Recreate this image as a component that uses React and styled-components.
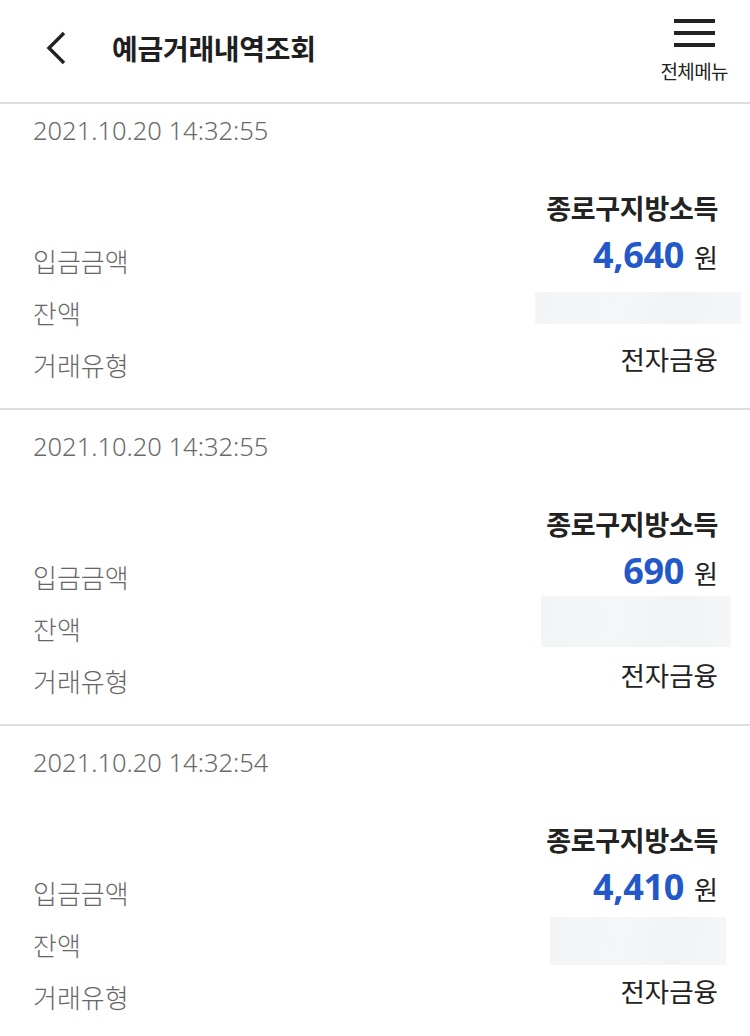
import React from "react";
import styled, { createGlobalStyle } from "styled-components";

const Global = createGlobalStyle`
  html, body { margin: 0; padding: 0; background: #fff; }
  body {
    font-family: "Noto Sans", "Noto Sans CJK KR", sans-serif;
    -webkit-font-smoothing: antialiased;
  }
  * { box-sizing: border-box; }
`;

const Screen = styled.div`
  width: 750px;
  height: 1036px;
  overflow: hidden;
  display: flex;
  flex-direction: column;
  background: #fff;
`;

const Header = styled.header`
  flex: 0 0 auto;
  height: 104px;
  display: flex;
  align-items: center;
  justify-content: space-between;
  border-bottom: 2px solid #dedede;
  padding: 0 22px 0 44px;
  position: relative;
  z-index: 1;
  background: #fff;
`;

const TitleGroup = styled.div`
  display: flex;
  align-items: center;
  gap: 44px;
  padding-bottom: 6px;
`;

const BackButton = styled.button`
  border: 0;
  background: none;
  padding: 0;
  width: 24px;
  height: 34px;
  display: flex;
  align-items: center;
  justify-content: center;
  color: #222;
`;

const Title = styled.h1`
  margin: 0;
  font-family: "Noto Sans CJK KR", sans-serif;
  font-size: 28px;
  font-weight: 700;
  color: #1f1f1f;
  letter-spacing: -0.3px;
`;

const MenuButton = styled.button`
  border: 0;
  background: none;
  padding: 0;
  display: flex;
  flex-direction: column;
  align-items: center;
  gap: 13px;
  margin-top: -2px;
`;

const Burger = styled.div`
  width: 41px;
  height: 28px;
  display: flex;
  flex-direction: column;
  justify-content: space-between;
`;

const BurgerLine = styled.span`
  display: block;
  height: 4px;
  background: #222;
`;

const MenuLabel = styled.span`
  font-family: "Noto Sans CJK KR", sans-serif;
  font-size: 19px;
  line-height: 22px;
  color: #222;
  letter-spacing: -0.6px;
`;

const Body = styled.div`
  flex: 1 1 auto;
  overflow: hidden;
`;

const List = styled.ul`
  list-style: none;
  margin: -10px 0 0;
  padding: 0;
`;

const Entry = styled.li`
  padding: 16px 32px 18px 33px;
  border-bottom: 2px solid #dedede;
`;

const DateText = styled.div`
  font-family: "Noto Sans", "Noto Sans CJK KR", sans-serif;
  font-size: 25.5px;
  line-height: 40px;
  font-weight: 300;
  color: #6a6a6a;
  margin-bottom: 32px;
`;

const Merchant = styled.div`
  font-family: "Noto Sans CJK KR", sans-serif;
  font-size: 27px;
  font-weight: 700;
  line-height: 52px;
  color: #222;
  text-align: right;
  letter-spacing: -0.3px;
`;

const Row = styled.div`
  height: 52px;
  display: flex;
  align-items: center;
  justify-content: space-between;
`;

const Label = styled.span`
  font-family: "Noto Sans CJK KR", sans-serif;
  font-size: 26px;
  font-weight: 300;
  color: #666;
`;

const Value = styled.span`
  font-family: "Noto Sans CJK KR", sans-serif;
  font-size: 26.5px;
  color: #222;
  padding-bottom: 12px;
`;

const AmountWrap = styled.span`
  display: flex;
  align-items: baseline;
  gap: 10px;
  padding-bottom: 12px;
`;

const Amount = styled.span`
  font-family: "Noto Sans", sans-serif;
  font-size: 36px;
  font-weight: 700;
  color: #2358c8;
  letter-spacing: -0.3px;
`;

const Won = styled.span`
  font-family: "Noto Sans CJK KR", sans-serif;
  font-size: 26px;
  color: #222;
`;

const Mask = styled.span`
  display: block;
  width: ${(p) => p.$w}px;
  height: ${(p) => p.$h}px;
  margin-right: ${(p) => -p.$over}px;
  margin-bottom: ${(p) => p.$lift}px;
  background: linear-gradient(100deg, #f3f4f6 0%, #f5f6f7 40%, #f2f3f5 70%, #f5f6f7 100%);
`;

const entries = [
  { date: "2021.10.20 14:32:55", amount: "4,640", mask: { w: 206, h: 32, over: 23, lift: 8 } },
  { date: "2021.10.20 14:32:55", amount: "690", mask: { w: 190, h: 51, over: 13, lift: 13 } },
  { date: "2021.10.20 14:32:54", amount: "4,410", mask: { w: 176, h: 48, over: 8, lift: 6 } },
];

function ChevronLeft() {
  return (
    <svg width="24" height="34" viewBox="0 0 24 34" fill="none">
      <path d="M20 2 L5 17 L20 32" stroke="#222" strokeWidth="3.4" strokeLinecap="butt" strokeLinejoin="miter" />
    </svg>
  );
}

export default function App() {
  return (
    <>
      <Global />
      <Screen>
        <Header>
          <TitleGroup>
            <BackButton aria-label="뒤로">
              <ChevronLeft />
            </BackButton>
            <Title>예금거래내역조회</Title>
          </TitleGroup>
          <MenuButton aria-label="전체메뉴">
            <Burger>
              <BurgerLine />
              <BurgerLine />
              <BurgerLine />
            </Burger>
            <MenuLabel>전체메뉴</MenuLabel>
          </MenuButton>
        </Header>
        <Body>
          <List>
            {entries.map((e, i) => (
              <Entry key={i}>
                <DateText>{e.date}</DateText>
                <Merchant>종로구지방소득</Merchant>
                <Row>
                  <Label>입금금액</Label>
                  <AmountWrap>
                    <Amount>{e.amount}</Amount>
                    <Won>원</Won>
                  </AmountWrap>
                </Row>
                <Row>
                  <Label>잔액</Label>
                  <Mask $w={e.mask.w} $h={e.mask.h} $over={e.mask.over} $lift={e.mask.lift} />
                </Row>
                <Row>
                  <Label>거래유형</Label>
                  <Value>전자금융</Value>
                </Row>
              </Entry>
            ))}
          </List>
        </Body>
      </Screen>
    </>
  );
}
